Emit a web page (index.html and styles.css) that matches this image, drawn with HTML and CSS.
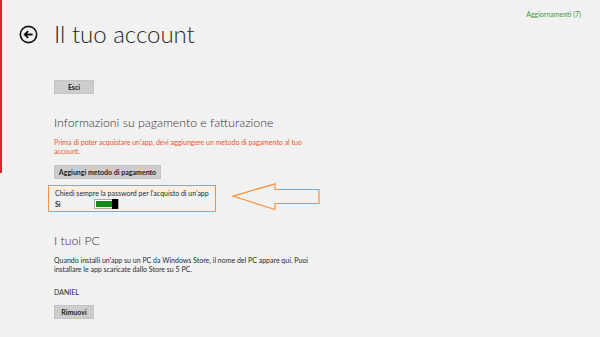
FILE: index.html
```html
<!DOCTYPE html>
<html lang="it">
<head>
  <meta charset="UTF-8">
  <meta name="viewport" content="width=device-width, initial-scale=1.0">
  <title>Il tuo account</title>
  <link rel="stylesheet" href="styles.css">
</head>
<body>
  <div class="topbar">
    <div class="heading">
      <svg class="back" width="19" height="19" viewBox="0 0 20 20">
        <circle cx="10" cy="10" r="8.6" fill="none" stroke="#111" stroke-width="1.7"/>
        <path d="M14.3 10H6.2M9.6 6.4L6 10l3.6 3.6" fill="none" stroke="#111" stroke-width="1.9"/>
      </svg>
      <h1>Il tuo account</h1>
    </div>
    <a class="updates" href="#">Aggiornamenti (7)</a>
  </div>

  <div class="content">
    <button class="btn">Esci</button>

    <!-- Pagamento -->
    <h2 class="section-title">Informazioni su pagamento e fatturazione</h2>
    <p class="warning">Prima di poter acquistare un'app, devi aggiungere un metodo di pagamento al tuo account.</p>
    <button class="btn btn-add">Aggiungi metodo di pagamento</button>

    <div class="password-row">
      <div class="password-box">
        <div class="line">Chiedi sempre la password per l'acquisto di un'app</div>
        <div class="toggle-row">
          <span class="toggle-label">Sì</span>
          <span class="toggle"><span class="fill"></span><span class="thumb"></span></span>
        </div>
      </div>
      <svg class="arrow" width="90" height="30" viewBox="0 0 90 30">
        <path d="M1 13.2L43 0.8V6.5H87V20.5H43V26.5Z" fill="none" stroke="#f7913f" stroke-width="1.2"/>
      </svg>
    </div>

    <!-- PC -->
    <h2 class="section-title pc-title">I tuoi PC</h2>
    <p class="info">Quando installi un'app su un PC da Windows Store, il nome del PC appare qui. Puoi installare le app scaricate dallo Store su 5 PC.</p>
    <div class="pc-name">DANIEL</div>
    <button class="btn btn-remove">Rimuovi</button>
  </div>
</body>
</html>
```

FILE: styles.css
```css
body {
  margin: 0;
  height: 337px;
  overflow: hidden;
  background: #f1f1f1;
  font-family: Lato, 'Open Sans', sans-serif;
  color: #2b2b2b;
  position: relative;
}
body::before {
  content: "";
  position: absolute;
  left: 0;
  top: 0;
  width: 2px;
  height: 173px;
  background: #d8262c;
}
.topbar {
  display: flex;
  justify-content: space-between;
  align-items: flex-start;
  padding: 0 19px;
}
.heading {
  display: flex;
  align-items: center;
  gap: 16px;
  margin-top: 19px;
}
.back {
  display: block;
}
h1 {
  margin: 0;
  font-size: 24px;
  line-height: 30px;
  font-weight: 300;
  color: #2a2a2a;
}
.updates {
  margin-top: 9px;
  font-size: 7px;
  line-height: 10px;
  color: #3c9a3c;
  text-decoration: none;
}
.content {
  padding-left: 54px;
}
.btn {
  display: block;
  min-width: 40px;
  height: 14px;
  margin: 31px 0 0;
  padding: 0 4px;
  border: 1px solid #c4c4c4;
  background: #cdcdcd;
  font-family: inherit;
  font-size: 7px;
  font-weight: 700;
  line-height: 12px;
  color: #222;
  white-space: nowrap;
  cursor: pointer;
}
.section-title {
  margin: 21px 0 0;
  font-size: 12.3px;
  line-height: 16px;
  font-weight: 300;
  color: #333;
}
.warning {
  margin: 7px 0 0;
  max-width: 254px;
  font-size: 7px;
  line-height: 9px;
  color: #e5562a;
}
.btn-add {
  margin-top: 9px;
  width: 107px;
  padding: 0;
}
.password-row {
  display: flex;
  align-items: center;
  gap: 16px;
  margin: 4px 0 0 -6px;
}
.password-box {
  width: 154px;
  padding: 2px 6px 2px 6px;
  border: 1px solid #f7913f;
  font-size: 7px;
  line-height: 10px;
  white-space: nowrap;
}
.toggle-row {
  display: flex;
  align-items: center;
  margin-top: 1px;
}
.toggle-label {
  width: 39px;
  font-weight: 700;
}
.toggle {
  display: flex;
  width: 22px;
  height: 6px;
  padding: 1px 0 1px 1px;
  border: 1px solid #a8a8a8;
  background: #fff;
}
.fill {
  flex: 1;
  background: #138a13;
}
.thumb {
  width: 6px;
  margin: -2px 0 -2px 0;
  background: #000;
}
.pc-title {
  margin-top: 20px;
}
.info {
  margin: 7px 0 0;
  max-width: 256px;
  font-size: 7px;
  line-height: 9px;
}
.pc-name {
  margin-top: 14px;
  font-size: 7px;
  line-height: 9px;
}
.btn-remove {
  margin-top: 8px;
}
```
